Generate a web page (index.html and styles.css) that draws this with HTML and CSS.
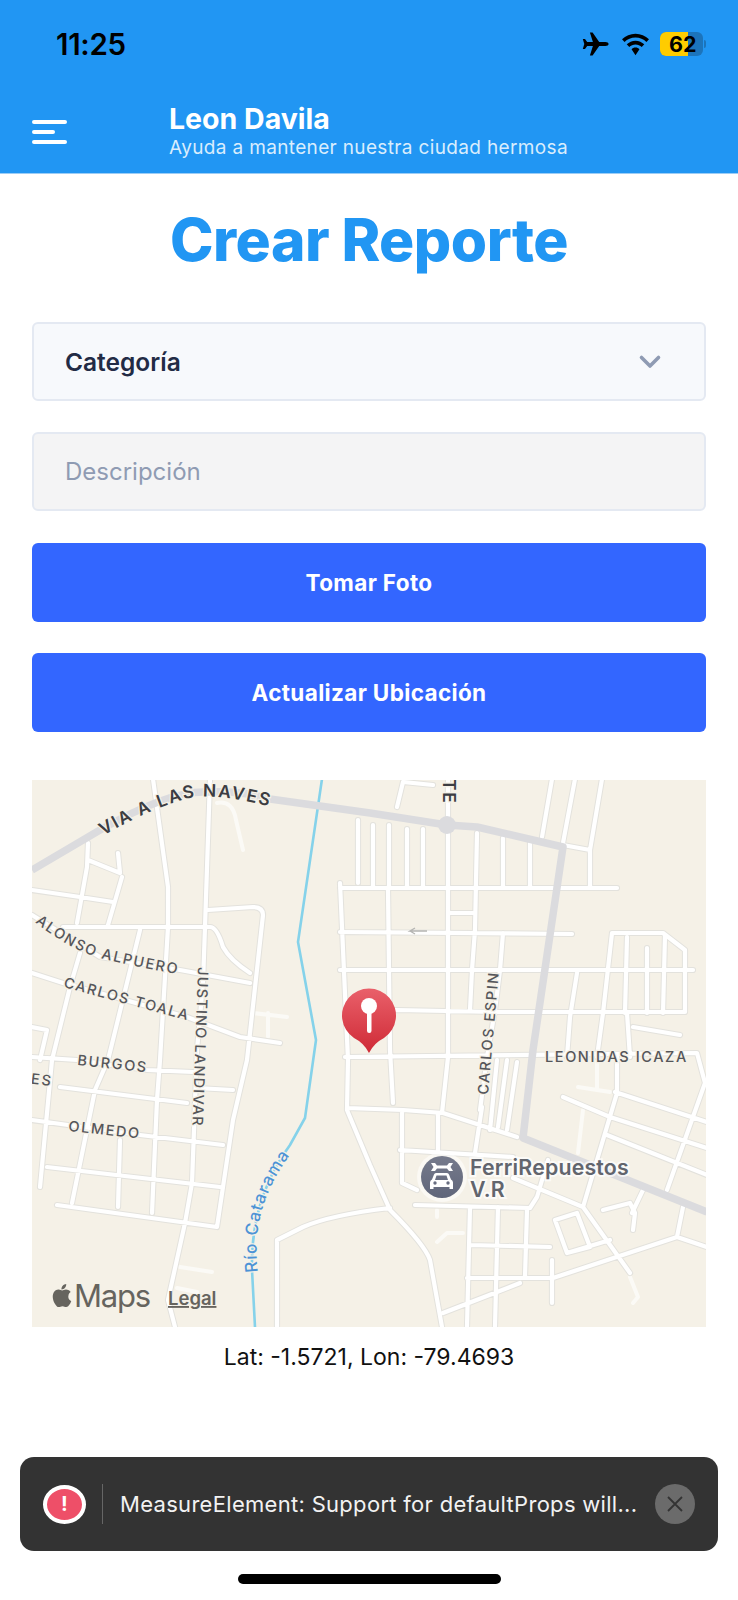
FILE: index.html
```html
<!doctype html>
<html>
<head>
  <meta charset="UTF-8">
  <meta name="viewport" content="width=device-width, initial-scale=1.0">
  <link rel="stylesheet" href="styles.css">
</head>
<body>
  <div class="Top">
    <div class="Status">
      <span class="Status-time">11:25</span>
      <div class="Status-icons">
        <svg class="Status-plane" width="28" height="24" viewBox="0 0 28 24"><path d="M26.6 12c0-1.2-1.4-2-3.2-2h-6.2L10.6.4H7.9l3 9.6H5.2L3 7H.8l1.5 5-1.5 5H3l2.2-3h5.7l-3 9.6h2.700l6.6-9.600h6.200c1.800 0 3.200-.8 3.200-2z"/></svg>
        <svg class="Status-wifi" width="31" height="23" viewBox="0 0 28 21"><path d="M14 4.200c3.900 0 7.400 1.500 10 4l2.300-2.400C23 2.600 18.700.6 14 .6S5 2.600 1.700 5.800L4 8.200c2.600-2.500 6.100-4 10-4z"/><path d="M14 10.400c2.200 0 4.200.9 5.700 2.300l2.300-2.400C19.900 8.300 17.100 7 14 7s-5.900 1.300-8 3.300l2.300 2.400c1.500-1.400 3.500-2.300 5.700-2.300z"/><path d="M14 13.300c-1.500 0-2.700.6-3.600 1.500L14 20.400l3.600-5.600c-.9-.9-2.100-1.500-3.600-1.500z"/></svg>
        <div class="Battery">
          <div class="Battery-fill"></div>
          <span class="Battery-num">62</span>
        </div>
        <div class="Battery-cap"></div>
      </div>
    </div>
    <div class="Nav">
      <div class="Nav-menu">
        <span class="Nav-bar"></span>
        <span class="Nav-bar Nav-bar--short"></span>
        <span class="Nav-bar"></span>
      </div>
      <div class="Nav-text">
        <div class="Nav-title">Leon Davila</div>
        <div class="Nav-sub">Ayuda a mantener nuestra ciudad hermosa</div>
      </div>
    </div>
  </div>

  <div class="Content">
    <h1 class="Title">Crear Reporte</h1>

    <div class="Field Field--select">
      <span>Categoría</span>
      <svg width="24" height="16" viewBox="0 0 24 16"><path d="M3.500 3.500 12 12l8.500-8.500" fill="none" stroke="#8f9bb3" stroke-width="3.600" stroke-linecap="round" stroke-linejoin="round"/></svg>
    </div>
    <div class="Field Field--input">Descripción</div>
    <div class="Btn">Tomar Foto</div>
    <div class="Btn">Actualizar Ubicación</div>

    <div class="Map">
      <svg class="Map-svg" width="674" height="547" viewBox="32 780 674 547">
        <defs>
          <path id="roads" d="M153 779 168 887V927L160 1060 157 1100 152 1213
            M210 779 205 927 203 983 197 1050 192 1183 185 1223 168 1300 175 1327
            M88 843 87 867 77 923
            M88 860 120 873 118 853M122 877 108 925
            M32 890 80 897 113 902
            M63 927H210M32 915 100 957 180 970 250 983
            M208 910 253 907Q263 907 263 915L247 1060 233 1120 217 1227
            M210 927Q217 927 223 947 230 960 250 973
            M140 930 108 1060 95 1090 72 1203
            M80 953 70 987 52 1060 40 1187
            M32 973 63 983 187 1017 240 1037 280 1043
            M32 1027 47 1030 40 1060
            M32 1057 77 1060 147 1070 193 1072
            M60 1087 187 1103
            M197 1088 233 1090
            M32 1120 140 1135 223 1145
            M47 1167 220 1187
            M57 1205 217 1227
            M120 1140 118 1207
            M340 883 348 1060 347 1110 370 1165 390 1210Q425 1245 430 1260L442 1327
            M277 1327V1240L303 1227Q330 1215 390 1208
            M340 888H617M340 932 572 934M340 970H693M345 1012 397 1010 495 1012 683 1012
            M345 1057 697 1053 705 1083
            M358 820V883
            M373 825V888M389 825V888M407 829V888M423 829V888
            M448 779V1057L442 1113
            M477 833 475 930 472 970 470 1010
            M503 838V887M530 843V887
            M388 890 390 1050 393 1103
            M503 933 500 970 495 1010 487 1057 480 1110
            M552 779 542 837M575 779 563 843M602 779 590 850V887M563 845 590 850
            M403 782 433 785M403 782 397 807
            M448 913H473
            M612 933H663L685 950V1012M612 933 603 1013 597 1057
            M627 937 625 1013M665 935 663 1013M577 973 570 1017 567 1057
            M647 948V1013
            M627 1013 630 1057M633 1027 680 1035
            M497 1060 490 1130M517 1062 507 1130M507 1060 498 1127
            M347 1108 403 1110 443 1113 517 1137
            M513 1178 583 1207
            M402 1113V1183L417 1190M438 1113V1150M482 1107 475 1153
            M400 1150 513 1157
            M415 1205 530 1208 537 1197 548 1160
            M470 1207 467 1327M498 1207 495 1327M527 1210 525 1277
            M470 1245 550 1247M467 1278H553L677 1237 707 1247
            M443 1313 520 1283
            M552 1260V1303
            M555 1220 577 1213 590 1247 567 1253 555 1220M567 1253 610 1240
            M583 1207 630 1273M603 1210 630 1203 635 1213 633 1230
            M617 1057V1093L583 1207
            M563 1097 610 1117M615 1092 707 1122M610 1117 707 1148M607 1135 707 1175
            M705 1083 667 1190M643 1190 632 1213M683 1207 677 1237"/>
          <path id="faint" d="M217 803Q233 800 236 820L243 850M253 1013 287 1017M268 1013V1037M597 1060V1090M578 1087 610 1092M583 1110 578 1153M630 1277 638 1297 633 1303M437 1242 447 1233H463M437 1210V1217M180 1267 212 1272M177 1288 197 1292"/>
          <path id="river" d="M322 779 298 942 316 1040 305 1118 290 1145Q250 1200 252 1270L255 1327"/>
          <path id="riverlabel" d="M258 1272Q248 1200 304 1138"/>
          <path id="via" d="M103 836Q150 808 190 798 225 792 300 815"/>
          <path id="alonso" d="M35 922Q70 950 100 958 140 968 190 976"/>
          <linearGradient id="pinfill" x1="0" y1="0" x2="0" y2="1">
            <stop offset="0" stop-color="#e9606a"/>
            <stop offset="1" stop-color="#cf2a36"/>
          </linearGradient>
          <linearGradient id="poifill" x1="0" y1="0" x2="0" y2="1">
            <stop offset="0" stop-color="#767b8c"/>
            <stop offset="1" stop-color="#60667a"/>
          </linearGradient>
        </defs>

        <rect x="32" y="780" width="674" height="547" fill="#f5f1e7"/>
        <use href="#faint" class="Road-faint"/>
        <use href="#river" class="River"/>
        <use href="#roads" class="Road-edge"/>
        <use href="#roads" class="Road"/>
        <path class="Main" d="M32 870 100 830Q170 790 207 792 240 790 270 799L370 813 447 825 477 827 533 840 563 847 533 1050 523 1138 707 1212"/>
        <circle cx="447" cy="825" r="9" fill="#dbdbde"/>
        <path d="M427 931H410l5-3M410 931l5 3" fill="none" stroke="#b5b5b3" stroke-width="1.400"/>

        <text class="Label Label--strong"><textPath href="#via">VIA A LAS NAVES</textPath></text>
        <text class="Label Label--strong" transform="translate(443 779) rotate(90)">TE</text>
        <text class="Label"><textPath href="#alonso">ALONSO ALPUERO</textPath></text>
        <text class="Label" transform="translate(63 987) rotate(15)">CARLOS TOALA</text>
        <text class="Label Label--tight" transform="translate(198 967) rotate(92)">JUSTINO LANDIVAR</text>
        <text class="Label" transform="translate(77 1065) rotate(6)">BURGOS</text>
        <text class="Label" transform="translate(19 1082) rotate(7)">YES</text>
        <text class="Label" transform="translate(68 1131) rotate(6)">OLMEDO</text>
        <text class="Label" transform="translate(488 1095) rotate(-85)">CARLOS ESPIN</text>
        <text class="Label" x="545" y="1062">LEONIDAS ICAZA</text>
        <text class="Label Label--river"><textPath href="#riverlabel">Río Catarama</textPath></text>

        <circle cx="442" cy="1177" r="25" fill="#fff" opacity=".55"/>
        <circle cx="442" cy="1177" r="21" fill="url(#poifill)"/>
        <path d="M431 1163h4l2 2.500h10l2-2.500h4l-2.500 4 2.500 4h-4l-2-2.500h-10l-2 2.500h-4l2.500-4z" fill="#fff"/>
        <path fill-rule="evenodd" d="M436 1173h11q1.500 0 2 1.500l2 5q2 1 2 3v6.500h-3.500v-2h-16v2H430v-6.500q0-2 2-3l2-5q.5-1.500 2-1.500zM436.500 1175.500l-1.500 4.500h13l-1.500-4.500z" fill="#fff"/>
        <circle cx="435" cy="1183" r="1.700" fill="#686d80"/>
        <circle cx="448" cy="1183" r="1.700" fill="#686d80"/>
        <text class="Poi" x="470" y="1175">FerriRepuestos</text>
        <text class="Poi" x="470" y="1197">V.R</text>

        <path d="M369 1053Q364 1043 354 1038A27 27 0 1 1 384 1038Q374 1043 369 1053z" fill="url(#pinfill)"/>
        <rect x="367" y="1006" width="4.500" height="27" rx="2.200" fill="#fff"/>
        <circle cx="369" cy="1006" r="8" fill="#fff"/>

        <path class="Map-apple" d="M66 1289.500c-1.600 0-2.900 1-3.800 1-1 0-2.200-1-3.700-.9-2 0-3.800 1.100-4.800 2.900-2 3.600-.5 8.800 1.500 11.700 1 1.400 2.100 3 3.600 2.900 1.400 0 2-.9 3.700-.9s2.200.9 3.700.9 2.500-1.400 3.500-2.800c1.100-1.600 1.500-3.200 1.600-3.300-.1 0-3-1.200-3-4.600 0-2.900 2.300-4.200 2.400-4.300-1.300-2-3.400-2.600-4.700-2.600zM65 1287.700c.8-1 1.400-2.400 1.200-3.700-1.200 0-2.600.8-3.500 1.800-.8.900-1.400 2.300-1.200 3.600 1.300.1 2.700-.7 3.500-1.700z"/>
        <text class="Map-brand" x="74" y="1307">Maps</text>
        <text class="Map-legal" x="168" y="1305">Legal</text>
      </svg>
    </div>

    <div class="Coords">Lat: -1.5721, Lon: -79.4693</div>
  </div>

  <div class="Toast">
    <div class="Toast-icon">!</div>
    <div class="Toast-line"></div>
    <div class="Toast-msg">MeasureElement: Support for defaultProps will...</div>
    <div class="Toast-close">
      <svg width="20" height="20" viewBox="0 0 20 20"><path d="M3 3 17 17M17 3 3 17" stroke="#333" stroke-width="1.800" fill="none"/></svg>
    </div>
  </div>
  <div class="Home"></div>
</body>
</html>
```

FILE: styles.css
```css
:root {
  --blue: #2196f3;
  --button: #3366ff;
  --dark-text: #222b45;
  --muted: #8f9bb3;
  --line: #e4e9f2;
}

html, body {
  margin: 0;
  padding: 0;
  background-color: #fff;
  font-family: Inter, 'Noto Sans', Arial, sans-serif;
}

body {
  position: relative;
  width: 738px;
  height: 1600px;
  overflow: hidden;
}

.Top {
  height: 173px;
  background-color: var(--blue);
  border-bottom: 1px solid #9ccdf6;
}

.Status {
  display: flex;
  align-items: center;
  justify-content: space-between;
  height: 88px;
  padding: 0 32px 0 56px;
}

.Status-time {
  font-size: 29.5px;
  font-weight: 600;
  color: #000;
  letter-spacing: -0.3px;
}

.Status-icons {
  display: flex;
  align-items: center;
}

.Status-plane {
  margin-right: 10px;
}

.Status-wifi {
  margin-right: 9px;
}

.Battery {
  position: relative;
  width: 43px;
  height: 24px;
  border-radius: 6px;
  overflow: hidden;
  background-color: #1c74bb;
}

.Battery-fill {
  width: 28px;
  height: 24px;
  background-color: #ffcc00;
}

.Battery-num {
  position: absolute;
  left: 9px;
  top: 0;
  font-size: 21.5px;
  line-height: 24px;
  font-weight: 700;
  color: #000;
}

.Battery-cap {
  width: 2px;
  height: 8px;
  margin-left: 1px;
  border-radius: 0 2px 2px 0;
  background-color: #1c74bb;
}

.Nav {
  display: flex;
  align-items: center;
  height: 85px;
}

.Nav-menu {
  display: flex;
  flex-direction: column;
  gap: 6px;
  width: 35px;
  margin: 0 102px 0 32px;
  padding-top: 3px;
}

.Nav-bar {
  display: block;
  height: 4px;
  border-radius: 2px;
  background-color: #fff;
}

.Nav-bar--short {
  width: 23px;
}

.Nav-title {
  padding-top: 1px;
  font-size: 28.5px;
  line-height: 34px;
  font-weight: 700;
  color: #fff;
}

.Nav-sub {
  font-size: 19px;
  line-height: 24px;
  letter-spacing: 0.35px;
  color: #d9edfd;
}

.Content {
  padding: 0 32px;
}

.Title {
  margin: 30px 0 46px;
  font-size: 58.7px;
  line-height: 72px;
  font-weight: 800;
  text-align: center;
  letter-spacing: -0.5px;
  color: var(--blue);
}

.Field {
  display: flex;
  align-items: center;
  box-sizing: border-box;
  height: 79px;
  margin-bottom: 31.25px;
  padding: 0 31px;
  border: 2px solid var(--line);
  border-radius: 6px;
  font-size: 24px;
}

.Field--select {
  justify-content: space-between;
  padding-right: 42px;
  background-color: #f7f9fc;
  font-size: 24.5px;
  font-weight: 600;
  color: var(--dark-text);
}

.Field--input {
  background-color: #f4f4f5;
  color: var(--muted);
}

.Btn {
  display: flex;
  align-items: center;
  justify-content: center;
  height: 79px;
  margin-bottom: 31.25px;
  border-radius: 6px;
  background-color: var(--button);
  font-size: 22.5px;
  font-weight: 700;
  letter-spacing: 0.35px;
  color: #fff;
}

.Map {
  height: 547px;
  margin-top: 48.25px;
}

.Map-svg {
  display: block;
}

.Road {
  fill: none;
  stroke: #fff;
  stroke-width: 4.2;
  stroke-linecap: round;
  stroke-linejoin: round;
}

.Road-edge {
  fill: none;
  stroke: #e3e2dd;
  stroke-width: 6.2;
  stroke-linecap: round;
  stroke-linejoin: round;
}

.Road-faint {
  fill: none;
  stroke: #fbfaf6;
  stroke-width: 4;
  stroke-linecap: round;
  stroke-linejoin: round;
}

.River {
  fill: none;
  stroke: #85d2ea;
  stroke-width: 2.6;
}

.Main {
  fill: none;
  stroke: #dbdbde;
  stroke-width: 7.5;
  stroke-linejoin: round;
}

.Label {
  font-size: 14.5px;
  font-weight: 500;
  letter-spacing: 1.6px;
  fill: #55565a;
  stroke: #f5f1e7;
  stroke-width: 2.5px;
  paint-order: stroke;
}

.Label--tight {
  letter-spacing: 1.2px;
}

.Label--strong {
  font-size: 17.5px;
  font-weight: 600;
  letter-spacing: 1.8px;
  fill: #3c3d42;
}

.Label--river {
  font-size: 17px;
  letter-spacing: 1.4px;
  fill: #4c93d6;
}

.Poi {
  font-size: 21.3px;
  font-weight: 600;
  letter-spacing: 0.2px;
  fill: #62656d;
  stroke: #fff;
  stroke-opacity: 0.7;
  stroke-width: 4px;
  paint-order: stroke;
}

.Map-apple {
  fill: #66645e;
}

.Map-brand {
  font-family: Inter, Arial, sans-serif;
  font-size: 31px;
  letter-spacing: -1.2px;
  fill: #66645e;
}

.Map-legal {
  font-size: 18.5px;
  font-weight: 600;
  text-decoration: underline;
  fill: #66645e;
}

.Coords {
  margin-top: 16px;
  font-size: 23px;
  line-height: 28px;
  text-align: center;
  color: #111;
}

.Toast {
  position: absolute;
  left: 20px;
  top: 1457px;
  display: flex;
  align-items: center;
  box-sizing: border-box;
  width: 698px;
  height: 94px;
  padding: 0 23px;
  border-radius: 14px;
  background-color: #333;
}

.Toast-icon {
  display: flex;
  flex: none;
  align-items: center;
  justify-content: center;
  box-sizing: border-box;
  width: 43px;
  height: 39px;
  border: 4px solid #fff;
  border-radius: 50%;
  background-color: #ee4f68;
  font-size: 20px;
  font-weight: 700;
  color: #fff;
}

.Toast-line {
  flex: none;
  width: 1px;
  height: 40px;
  margin: 0 17px 0 16px;
  background-color: #666;
}

.Toast-msg {
  flex: 1;
  font-size: 22px;
  letter-spacing: 0.3px;
  white-space: nowrap;
  color: #f2f2f2;
}

.Toast-close {
  display: flex;
  flex: none;
  align-items: center;
  justify-content: center;
  width: 40px;
  height: 40px;
  border-radius: 50%;
  background-color: #6b6b6b;
}

.Home {
  position: absolute;
  left: 238px;
  top: 1574px;
  width: 263px;
  height: 10px;
  border-radius: 5px;
  background-color: #000;
}
```
